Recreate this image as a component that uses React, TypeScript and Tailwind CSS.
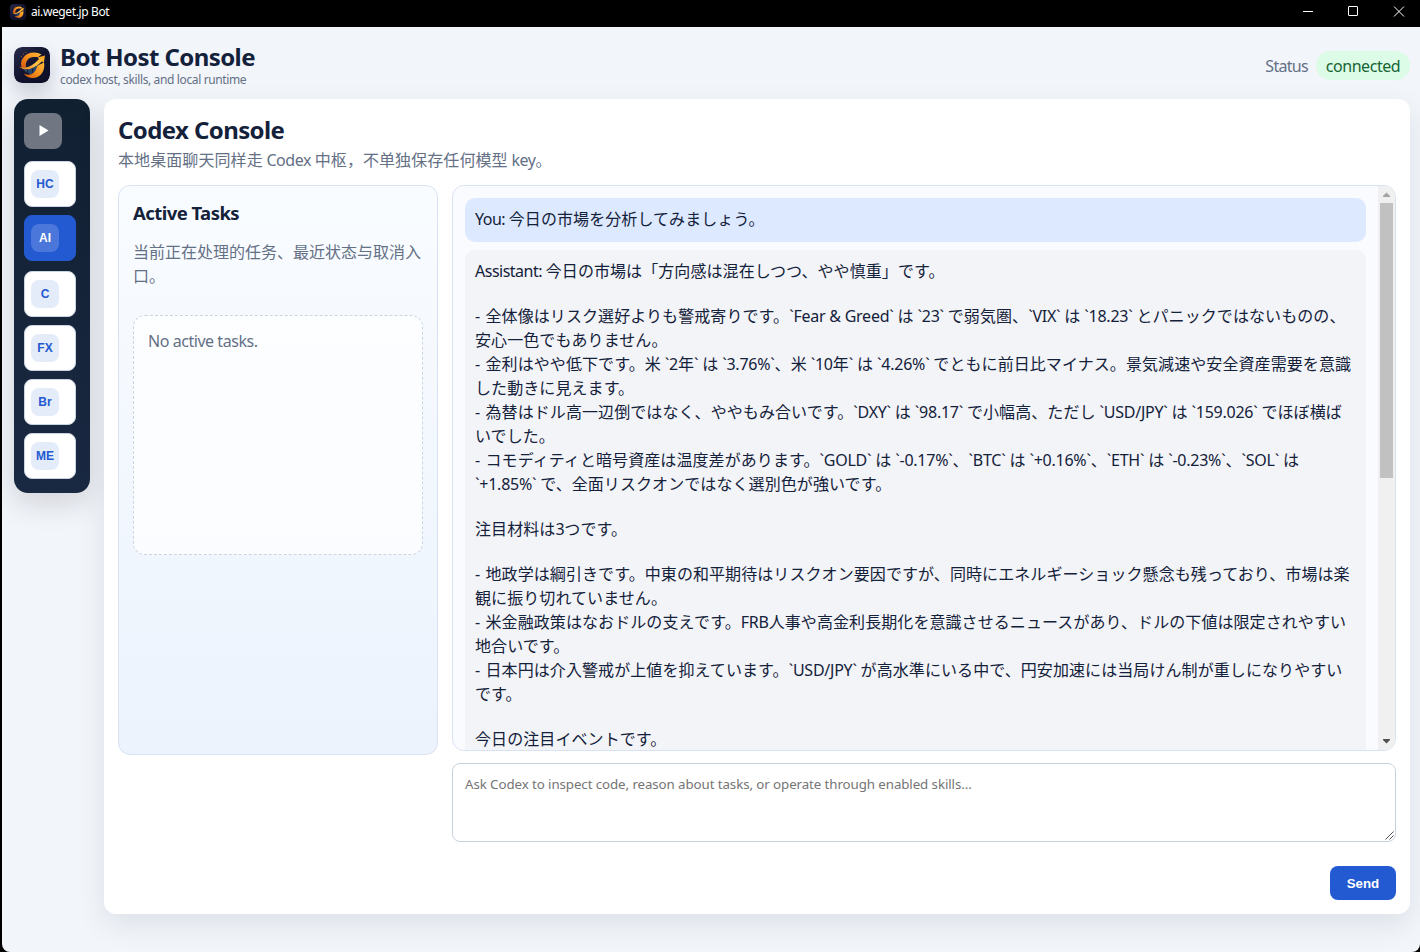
import React from 'react';
import { clsx } from 'clsx';

const NAV_ITEMS = ['HC', 'AI', 'C', 'FX', 'Br', 'ME'];

// Empty strings are blank lines between paragraphs
const ASSISTANT_LINES = [
  'Assistant: 今日の市場は「方向感は混在しつつ、やや慎重」です。',
  '',
  '- 全体像はリスク選好よりも警戒寄りです。`Fear & Greed` は `23` で弱気圏、`VIX` は `18.23` とパニックではないものの、',
  '安心一色でもありません。',
  '- 金利はやや低下です。米 `2年` は `3.76%`、米 `10年` は `4.26%` でともに前日比マイナス。景気減速や安全資産需要を意識',
  'した動きに見えます。',
  '- 為替はドル高一辺倒ではなく、ややもみ合いです。`DXY` は `98.17` で小幅高、ただし `USD/JPY` は `159.026` でほぼ横ば',
  'いでした。',
  '- コモディティと暗号資産は温度差があります。`GOLD` は `-0.17%`、`BTC` は `+0.16%`、`ETH` は `-0.23%`、`SOL` は',
  '`+1.85%` で、全面リスクオンではなく選別色が強いです。',
  '',
  '注目材料は3つです。',
  '',
  '- 地政学は綱引きです。中東の和平期待はリスクオン要因ですが、同時にエネルギーショック懸念も残っており、市場は楽',
  '観に振り切れていません。',
  '- 米金融政策はなおドルの支えです。FRB人事や高金利長期化を意識させるニュースがあり、ドルの下値は限定されやすい',
  '地合いです。',
  '- 日本円は介入警戒が上値を抑えています。`USD/JPY` が高水準にいる中で、円安加速には当局けん制が重しになりやすい',
  'です。',
  '',
  '今日の注目イベントです。',
];

function latinTracking(part: string) {
  if (part === '- ') return 'tracking-[0.6px]';
  if (/^[A-Z][a-z]+: $/.test(part)) return 'tracking-[-0.5px]';
  if (/^ [A-Za-z]+ ?$/.test(part)) return 'tracking-[-0.45px]';
  return 'tracking-[-0.24px]';
}

/** Spaces the Latin runs separately from the full-width CJK glyphs. */
function Mixed({ text }: { text: string }) {
  return (
    <span className="tracking-[0.08px]">
      {text.split(/([\x20-\x7e]+)/).map((part, i) =>
        i % 2 === 1 ? (
          <span key={i} className={latinTracking(part)}>
            {part}
          </span>
        ) : (
          part
        )
      )}
    </span>
  );
}

function Logo({ className }: { className?: string }) {
  return (
    <svg className={className} viewBox="0 0 36 36" fill="none">
      <defs>
        <linearGradient id="logoBg" x1="0" y1="0" x2="1" y2="1">
          <stop offset="0" stopColor="#262a4a" />
          <stop offset="0.5" stopColor="#12142f" />
          <stop offset="1" stopColor="#0d1027" />
        </linearGradient>
        <linearGradient id="logoTop" x1="0" y1="0.8" x2="1" y2="0">
          <stop offset="0" stopColor="#d9600f" />
          <stop offset="0.5" stopColor="#f7931f" />
          <stop offset="1" stopColor="#ffb938" />
        </linearGradient>
        <linearGradient id="logoArrow" x1="0" y1="1" x2="1" y2="0">
          <stop offset="0" stopColor="#e8791a" />
          <stop offset="0.5" stopColor="#ffc54a" />
          <stop offset="1" stopColor="#fba11f" />
        </linearGradient>
      </defs>
      <rect width="36" height="36" rx="8" fill="url(#logoBg)" />
      <path d="M9 22c4 1 9-1 14-5l1 6c-3 5-10 6-15-1z" fill="#29466b" />
      <path d="M13 21.500l1.500 5M18 19.500l1 7" stroke="#12142f" strokeWidth="0.8" />
      <path d="M27.500 7.500C22 4 13 5 9 11c-2.500 3.500-2.500 7-1 10l4-1c-1-5 2-10 8-10h4z" fill="url(#logoTop)" />
      <path d="M30 15.500c1.500 8-3 15-10.500 15.500-4 .3-8-1.500-9.500-4.500 6 3 11 0 12.500-5.500l1-2.500z" fill="url(#logoTop)" />
      <path d="M5 19.500c7 3 14-1 20-7.500l-1.500-1.500L31 8.500l-1.200 7.500-1.800-1.800C21 21 12 25.500 5 19.500z" fill="url(#logoArrow)" />
      <path d="M9 7h1M7 9.500h1M11.500 5.500h.8" stroke="#a9571f" />
    </svg>
  );
}

function TitleBar() {
  return (
    <div className="flex h-[27px] shrink-0 items-start justify-between bg-black pl-2 text-white">
      <div className="flex items-center gap-[5px] pt-[3px]">
        <Logo className="size-4" />
        <span className="text-[12px] leading-[18px] tracking-[-0.38px]">ai.weget.jp Bot</span>
      </div>
      <svg className="h-[27px] w-[120px]" viewBox="0 0 120 27" fill="none" stroke="white">
        <path d="M3 11.5h10M94 6.5l10 10M104 6.5l-10 10" />
        <rect x="48.5" y="6.5" width="9" height="9" rx="0.5" />
      </svg>
    </div>
  );
}

function Sidebar() {
  return (
    <nav className="flex h-[394px] w-[76px] shrink-0 flex-col rounded-[14px] bg-linear-to-b from-[#112031] to-[#1a2942] px-2.5 py-3.5 shadow-[0_10px_30px_rgba(15,23,30,0.15)]">
      <button className="mb-3 flex h-9 w-[38px] items-center justify-center rounded-lg bg-[#707682] pb-0.5 pl-0.5">
        <svg className="h-[11px] w-[10px]" viewBox="0 0 10 11" fill="white">
          <path d="M0.5 0v11l9-5.5z" />
        </svg>
      </button>
      <div className="flex flex-col gap-2">
        {NAV_ITEMS.map((item) => {
          const active = item === 'AI';
          return (
            <button
              key={item}
              className={clsx(
                'flex h-[46px] w-[52px] items-center rounded-lg border pl-1.5',
                active ? 'mb-0.5 border-[#2359d1] bg-[#2359d1]' : 'border-[#cbd5e1] bg-white'
              )}
            >
              <span
                className={clsx(
                  'flex size-7 items-center justify-center rounded-lg font-["Liberation_Sans",sans-serif] text-[12px] font-bold',
                  active ? 'bg-[#4a77d9] text-white' : 'bg-[#e4ebf9] text-[#2359d1]'
                )}
              >
                {item}
              </span>
            </button>
          );
        })}
      </div>
    </nav>
  );
}

function TaskPanel() {
  return (
    <section className="h-[570px] w-[320px] shrink-0 rounded-xl border border-[#d9e2f2] bg-linear-to-b from-[#f9fcff] to-[#ecf3fd] px-3.5">
      <h3 className="mt-[15px] text-[18.5px] leading-6 font-bold tracking-[-0.55px]">Active Tasks</h3>
      <p lang="zh-CN" className="mt-[15px] text-base leading-6 whitespace-nowrap text-[#647085]">
        当前正在处理的任务、最近状态与取消入
        <br />
        口。
      </p>
      <div className="mt-[27px] h-[240px] rounded-xl border border-dashed border-[#cbd5e1] bg-white/70 px-3.5 py-[13px] text-base leading-6 tracking-[-0.45px] text-[#647085]">
        No active tasks.
      </div>
    </section>
  );
}

function Scrollbar() {
  return (
    <div className="flex w-[17px] shrink-0 flex-col items-center bg-[#f0f0f0]">
      <svg className="h-[17px] w-[17px] shrink-0" viewBox="0 0 17 17" fill="#a3a3a3">
        <path d="M5 11h7v-1L8.500 6.500 5 10z" />
      </svg>
      <div className="h-[275px] w-[13px] bg-[#c1c1c1]" />
      <svg className="mt-auto h-[17px] w-[17px] shrink-0" viewBox="0 0 17 17" fill="#505050">
        <path d="M5 6h7v1L8.500 10.500 5 7z" />
      </svg>
    </div>
  );
}

function Chat() {
  return (
    <section className="flex min-w-0 flex-1 flex-col">
      <div className="flex h-[566px] overflow-hidden rounded-xl border border-[#d9e2f2] bg-[#f9fbff]">
        <div className="flex min-w-0 flex-1 flex-col gap-2 overflow-hidden p-3">
          <div className="shrink-0 rounded-[10px] bg-[#dce9ff] px-2.5 pt-[9px] pb-[11px] text-base leading-6 whitespace-pre">
            <Mixed text="You: 今日の市場を分析してみましょう。" />
          </div>
          <div className="shrink-0 rounded-[10px] bg-[#f2f4f8] px-2.5 pt-[9px] pb-[11px] text-base whitespace-pre">
            {ASSISTANT_LINES.map((line, i) => (
              <div key={i} className={line ? 'h-6 leading-6' : 'h-[21px]'}>
                <Mixed text={line} />
              </div>
            ))}
          </div>
        </div>
        <Scrollbar />
      </div>
      <div className="relative mt-3 h-[79px] rounded-lg border border-[#c8d2de] bg-white px-3 py-[11px] text-[13.3px] leading-[18px] tracking-[-0.08px] text-[#757575]">
        Ask Codex to inspect code, reason about tasks, or operate through enabled skills...
        <svg className="absolute right-px bottom-px size-[9px]" viewBox="0 0 9 9" stroke="#555">
          <path d="M0.500 8.500l8-8M4.500 8.500l4-4" />
        </svg>
      </div>
      <button className="mt-6 h-[34px] w-[66px] self-end rounded-lg bg-[#2359d1] pt-px font-['Liberation_Sans',sans-serif] text-[13.3px] font-bold text-white">
        Send
      </button>
    </section>
  );
}

export default function App() {
  return (
    <div lang="ja" className="h-[952px] w-[1420px] overflow-hidden bg-black pl-0.5 font-['Noto_Sans','Noto_Sans_CJK_JP',sans-serif] text-[#14213a]">
      <div className="flex h-full flex-col overflow-hidden rounded-b-lg bg-[#f2f5fa]">
        <TitleBar />
        <header className="flex h-[72px] shrink-0 items-start justify-between pr-2.5 pl-3">
          <div className="flex gap-2.5 pt-5">
            <Logo className="size-9 rounded-lg shadow-[0_8px_18px_rgba(15,23,42,0.18)]" />
            <div>
              <h1 className="-mt-[5px] text-2xl leading-[30px] font-bold tracking-[-0.58px]">Bot Host Console</h1>
              <p className="mt-px text-[12px] leading-[14px] tracking-[-0.37px] text-[#647085]">
                codex host, skills, and local runtime
              </p>
            </div>
          </div>
          <div className="mt-6 flex items-start gap-2 text-base leading-[29px]">
            <span className="pt-px tracking-[-0.7px] text-[#647085]">Status</span>
            <span className="h-[29px] w-[94px] rounded-full bg-[#dcfce7] pt-px text-center tracking-[-0.45px] text-[#166534]">
              connected
            </span>
          </div>
        </header>
        <div className="flex items-start gap-3.5 pl-3">
          <Sidebar />
          <main className="h-[815px] w-[1306px] rounded-xl bg-white px-3.5 shadow-[0_10px_30px_rgba(15,23,30,0.09)]">
            <h2 className="pt-[15px] text-2xl leading-8 font-bold tracking-[-0.6px]">Codex Console</h2>
            <p lang="zh-CN" className="mb-[13px] pt-0.5 text-base leading-6 text-[#647085]">
              <Mixed text="本地桌面聊天同样走 Codex 中枢，不单独保存任何模型 key。" />
            </p>
            <div className="flex items-start gap-3.5">
              <TaskPanel />
              <Chat />
            </div>
          </main>
        </div>
      </div>
    </div>
  );
}
